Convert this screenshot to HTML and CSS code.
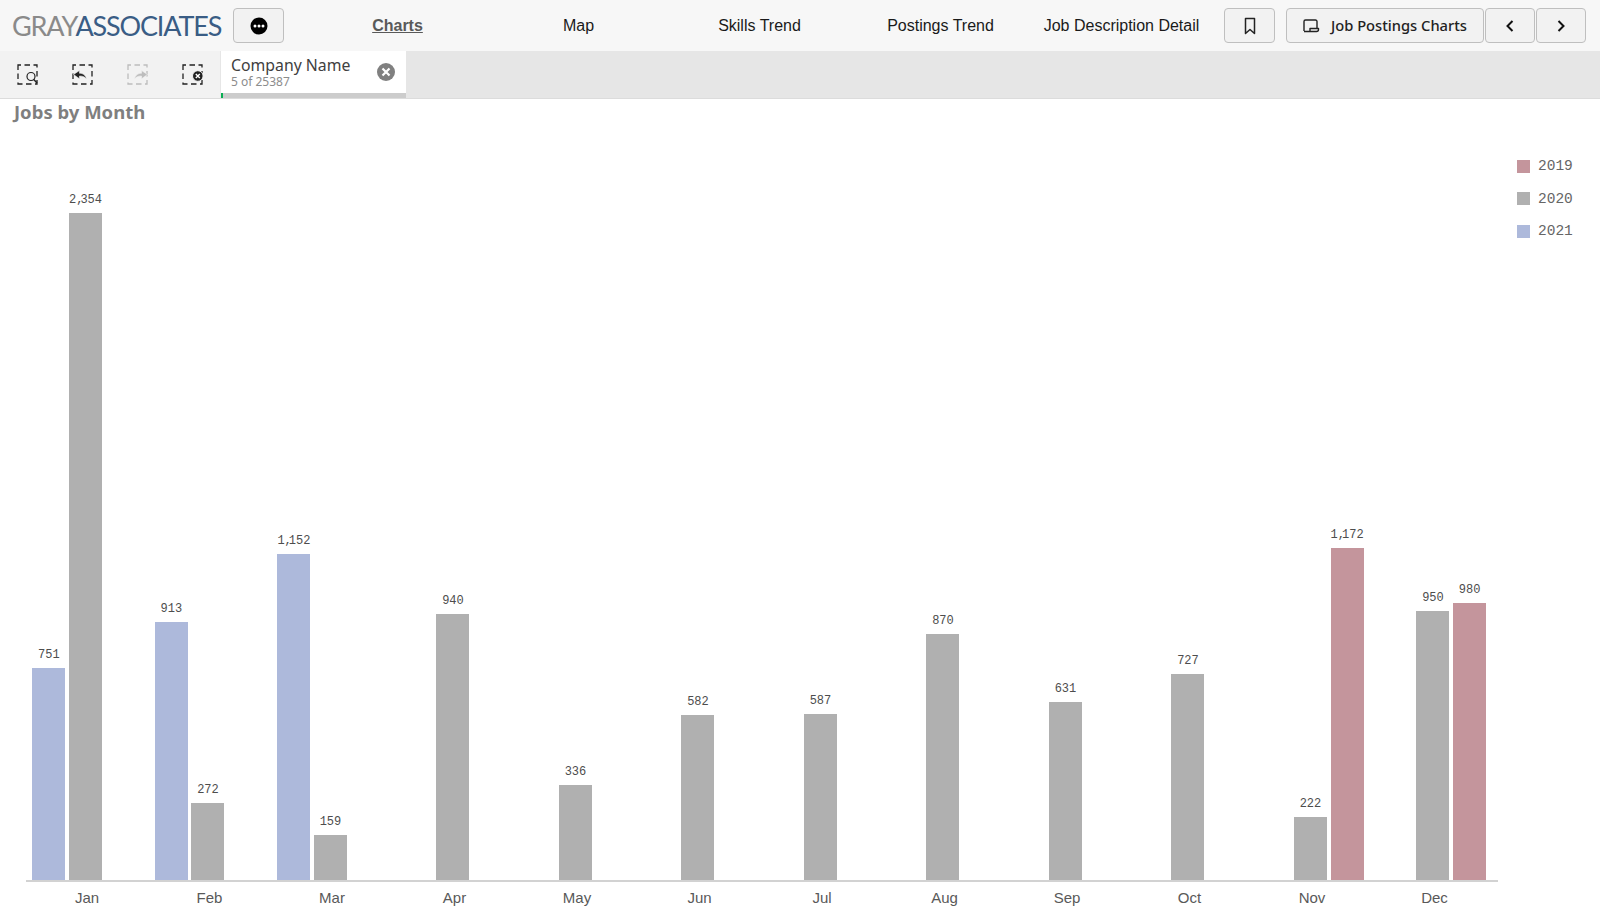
FILE: index.html
```html
<!DOCTYPE html>
<html lang="en">
<head>
    <meta charset="UTF-8">
    <meta name="viewport" content="width=device-width, initial-scale=1.0">
    <title>Jobs by Month</title>
    <link rel="stylesheet" href="styles.css">
</head>
<body>
    <header class="top-bar">
        <div class="logo"><span class="logo-gray">GRAY</span><span class="logo-blue">ASSOCIATES</span></div>
        <button class="btn btn-menu">
            <svg width="18" height="18" viewBox="0 0 18 18"><circle cx="9" cy="9" r="8.5" fill="#000"/><circle cx="5" cy="9" r="1.5" fill="#fff"/><circle cx="9" cy="9" r="1.5" fill="#fff"/><circle cx="13" cy="9" r="1.5" fill="#fff"/></svg>
        </button>
        <nav class="nav">
            <a class="nav-link active">Charts</a>
            <a class="nav-link">Map</a>
            <a class="nav-link">Skills Trend</a>
            <a class="nav-link">Postings Trend</a>
            <a class="nav-link">Job Description Detail</a>
        </nav>
        <button class="btn btn-bookmark">
            <svg width="12" height="18" viewBox="0 0 12 18"><path d="M1.500 1.500h9v15L6 12.500l-4.500 4z" fill="none" stroke="#222" stroke-width="1.500" stroke-linejoin="round"/></svg>
        </button>
        <div class="sheet-btns">
            <button class="btn btn-sheet">
                <svg width="18" height="14" viewBox="0 0 18 14"><path d="M1 12V2.500A1.500 1.500 0 0 1 2.500 1h10A1.500 1.500 0 0 1 14 2.500V9M1 12.500h12.500a2 2 0 0 0 2-2V9.500H7v3" fill="none" stroke="#222" stroke-width="1.400" stroke-linejoin="round"/></svg>
                <span class="btn-label">Job Postings Charts</span>
            </button>
            <button class="btn btn-arrow">
                <svg width="10" height="14" viewBox="0 0 10 14"><path d="M7.500 2 2.500 7l5 5" fill="none" stroke="#111" stroke-width="2"/></svg>
            </button>
            <button class="btn btn-arrow">
                <svg width="10" height="14" viewBox="0 0 10 14"><path d="m2.500 2 5 5-5 5" fill="none" stroke="#111" stroke-width="2"/></svg>
            </button>
        </div>
    </header>

    <div class="selection-bar">
        <div class="tools">
            <span class="tool">
                <svg width="22" height="22" viewBox="0 0 22 22"><rect class="dash" x="1" y="1" width="19" height="19"/><circle cx="14" cy="12.500" r="4" fill="#f2f2f2" stroke="#222" stroke-width="1.200"/><path d="m16.800 15.500 3.200 3.500" stroke="#222" stroke-width="1.500"/></svg>
            </span>
            <span class="tool">
                <svg width="22" height="22" viewBox="0 0 22 22"><rect class="dash" x="1" y="1" width="19" height="19"/><path d="M1.500 10.500 7.500 6.500v2.800c3.500 0 6 1.700 7 5.700-1.500-2.200-3.800-3-7-3v2.800z" fill="#222" stroke="#f2f2f2" stroke-width=".6"/></svg>
            </span>
            <span class="tool tool-off">
                <svg width="22" height="22" viewBox="0 0 22 22"><rect class="dash" x="1" y="1" width="19" height="19"/><path d="M20.500 10.500 14.500 6.500v2.800c-3.500 0-6 1.700-7 5.700 1.500-2.200 3.800-3 7-3v2.800z" fill="#222" stroke="#f2f2f2" stroke-width=".6"/></svg>
            </span>
            <span class="tool">
                <svg width="22" height="22" viewBox="0 0 22 22"><rect class="dash" x="1" y="1" width="19" height="19"/><circle cx="15.800" cy="12" r="5.300" fill="#222" stroke="#f2f2f2"/><path d="m13.800 10 4 4m0-4-4 4" stroke="#fff" stroke-width="1.400"/></svg>
            </span>
        </div>
        <div class="chip">
            <div class="chip-text">
                <div class="chip-title">Company Name</div>
                <div class="chip-sub">5 of 25387</div>
            </div>
            <svg class="chip-close" width="18" height="18" viewBox="0 0 18 18"><circle cx="9" cy="9" r="9" fill="#808080"/><path d="m5.500 5.500 7 7m0-7-7 7" stroke="#fff" stroke-width="2.200"/></svg>
            <div class="chip-state"><span class="chip-green"></span></div>
        </div>
    </div>

    <main class="chart-panel">
        <h1 class="chart-title">Jobs by Month</h1>
        <div class="chart">
            <div class="plot">
                <div class="bars">
                    <div class="month">
                        <div class="col y2021"><span class="val">751</span><div class="bar" style="height:212.5px"></div></div>
                        <div class="col y2020"><span class="val">2<span class="comma">,</span>354</span><div class="bar" style="height:667px"></div></div>
                    </div>
                    <div class="month">
                        <div class="col y2021"><span class="val">913</span><div class="bar" style="height:258.3px"></div></div>
                        <div class="col y2020"><span class="val">272</span><div class="bar" style="height:77px"></div></div>
                    </div>
                    <div class="month">
                        <div class="col y2021"><span class="val">1<span class="comma">,</span>152</span><div class="bar" style="height:325.9px"></div></div>
                        <div class="col y2020"><span class="val">159</span><div class="bar" style="height:45px"></div></div>
                    </div>
                    <div class="month">
                        <div class="col y2020"><span class="val">940</span><div class="bar" style="height:265.9px"></div></div>
                    </div>
                    <div class="month">
                        <div class="col y2020"><span class="val">336</span><div class="bar" style="height:95px"></div></div>
                    </div>
                    <div class="month">
                        <div class="col y2020"><span class="val">582</span><div class="bar" style="height:164.6px"></div></div>
                    </div>
                    <div class="month">
                        <div class="col y2020"><span class="val">587</span><div class="bar" style="height:166px"></div></div>
                    </div>
                    <div class="month">
                        <div class="col y2020"><span class="val">870</span><div class="bar" style="height:246px"></div></div>
                    </div>
                    <div class="month">
                        <div class="col y2020"><span class="val">631</span><div class="bar" style="height:178.5px"></div></div>
                    </div>
                    <div class="month">
                        <div class="col y2020"><span class="val">727</span><div class="bar" style="height:205.7px"></div></div>
                    </div>
                    <div class="month">
                        <div class="col y2020"><span class="val">222</span><div class="bar" style="height:62.8px"></div></div>
                        <div class="col y2019"><span class="val">1<span class="comma">,</span>172</span><div class="bar" style="height:331.6px"></div></div>
                    </div>
                    <div class="month">
                        <div class="col y2020"><span class="val">950</span><div class="bar" style="height:268.8px"></div></div>
                        <div class="col y2019"><span class="val">980</span><div class="bar" style="height:277.2px"></div></div>
                    </div>
                </div>
                <div class="labels">
                    <span>Jan</span><span>Feb</span><span>Mar</span><span>Apr</span><span>May</span><span>Jun</span>
                    <span>Jul</span><span>Aug</span><span>Sep</span><span>Oct</span><span>Nov</span><span>Dec</span>
                </div>
            </div>
            <ul class="legend">
                <li class="legend-item y2019"><span class="swatch"></span>2019</li>
                <li class="legend-item y2020"><span class="swatch"></span>2020</li>
                <li class="legend-item y2021"><span class="swatch"></span>2021</li>
            </ul>
        </div>
    </main>
</body>
</html>
```

FILE: styles.css
```css
html, body {
    height: 100%;
}

body {
    margin: 0;
    display: flex;
    flex-direction: column;
    overflow: hidden;
    background-color: #fff;
    font-family: 'Noto Sans', sans-serif;
}

/* Top bar */
.top-bar {
    display: flex;
    align-items: center;
    height: 51px;
    flex-shrink: 0;
    padding: 0 13px 0 12px;
    box-sizing: border-box;
    background-color: #f7f7f7;
}

.logo {
    width: 221px;
    font-family: 'Lato', sans-serif;
    font-size: 27px;
    line-height: 1;
    letter-spacing: -1.150px;
    white-space: nowrap;
}

.logo-gray {
    color: #8a8a8a;
}

.logo-blue {
    color: #3a5d85;
}

.btn {
    display: flex;
    align-items: center;
    justify-content: center;
    flex-shrink: 0;
    height: 35px;
    padding: 0;
    border: 1px solid #bfbfbf;
    border-radius: 4px;
    background-color: #f2f2f2;
    font-family: 'Noto Sans', sans-serif;
    color: #222;
}

.btn-menu {
    width: 51px;
}

.nav {
    display: flex;
    flex-shrink: 0;
    margin-left: 23px;
    width: 905px;
}

.nav-link {
    width: 181px;
    text-align: center;
    font-family: 'Liberation Sans', sans-serif;
    font-size: 16px;
    color: #1a1a1a;
    white-space: nowrap;
}

.nav-link.active {
    font-weight: bold;
    color: #595959;
    text-decoration: underline;
}

.btn-bookmark {
    width: 51px;
    margin-left: 12px;
}

.sheet-btns {
    display: flex;
    gap: 1px;
    margin-left: 11px;
}

.btn-sheet {
    width: 198px;
    gap: 10px;
    font-size: 14.700px;
    font-weight: 500;
}

.btn-label {
    margin-bottom: 2px;
}

.btn-arrow {
    width: 50px;
}

/* Selection bar */
.selection-bar {
    display: flex;
    height: 48px;
    flex-shrink: 0;
    box-sizing: border-box;
    background-color: #e6e6e6;
    border-bottom: 1px solid #dcdcdc;
}

.tools {
    display: flex;
    width: 220px;
    background-color: #f2f2f2;
}

.tool {
    display: flex;
    align-items: center;
    justify-content: center;
    width: 55px;
}

.tool-off {
    opacity: 0.25;
}

/* corner, side dash, corner on each edge of the box */
.dash {
    fill: none;
    stroke: #222;
    stroke-width: 1.300;
    stroke-dasharray: 3 3.500 5.500 3.500 3 0;
}

.chip {
    position: relative;
    display: flex;
    align-items: flex-start;
    justify-content: space-between;
    width: 185px;
    margin-left: 1px;
    padding: 4px 11px 0 10px;
    box-sizing: border-box;
    background-color: #fff;
}

.chip-title {
    font-size: 15.800px;
    line-height: 20px;
    color: #404040;
}

.chip-sub {
    font-size: 12px;
    line-height: 14px;
    color: #8c8c8c;
}

.chip-close {
    margin-top: 8px;
}

.chip-state {
    position: absolute;
    left: 0;
    right: 0;
    bottom: 0;
    height: 5px;
    background-color: #cccccc;
}

.chip-green {
    display: block;
    width: 2px;
    height: 5px;
    background-color: #0aaf54;
}

/* Chart */
.chart-panel {
    flex: 1;
    display: flex;
    flex-direction: column;
    min-height: 0;
}

.chart-title {
    margin: 0;
    padding: 0 0 0 14px;
    font-size: 18.500px;
    line-height: 26px;
    font-weight: bold;
    color: #7f7f7f;
}

.chart {
    flex: 1;
    display: flex;
    min-height: 0;
    padding-left: 26px;
}

.plot {
    display: flex;
    flex-direction: column;
    width: 1472px;
}

.bars {
    flex: 1;
    display: flex;
    align-items: flex-end;
    gap: 12.500px;
    padding-left: 6.400px;
    border-bottom: 2px solid #d2d2d2;
}

.month {
    display: grid;
    grid-template-columns: repeat(3, 33px);
    column-gap: 3.600px;
    align-items: end;
    width: 110px;
}

.col {
    display: flex;
    flex-direction: column;
    align-items: center;
}

.col.y2021 { grid-column: 1; }
.col.y2020 { grid-column: 2; }
.col.y2019 { grid-column: 3; }

.bar {
    width: 33px;
}

.y2021 .bar, .y2021 .swatch { background-color: #adb9db; }
.y2020 .bar, .y2020 .swatch { background-color: #b0b0b0; }
.y2019 .bar, .y2019 .swatch { background-color: #c4959c; }

.val {
    margin-bottom: 6px;
    font-family: 'Liberation Mono', monospace;
    font-size: 12px;
    line-height: 14px;
    color: #4d4d4d;
    white-space: nowrap;
}

.comma {
    letter-spacing: -3px;
}

.labels {
    display: flex;
    gap: 12.500px;
    height: 38px;
    padding-left: 6px;
}

.labels span {
    width: 110px;
    padding-top: 7px;
    text-align: center;
    font-family: 'Liberation Sans', sans-serif;
    font-size: 15px;
    line-height: 17px;
    color: #595959;
}

.legend {
    display: flex;
    flex-direction: column;
    gap: 14.500px;
    margin: 32px 0 0 19px;
    padding: 0;
    list-style: none;
}

.legend-item {
    display: flex;
    align-items: center;
    gap: 8px;
    height: 18px;
    font-family: 'Liberation Mono', monospace;
    font-size: 14.500px;
    color: #666666;
}

.swatch {
    width: 13px;
    height: 13px;
}
```
